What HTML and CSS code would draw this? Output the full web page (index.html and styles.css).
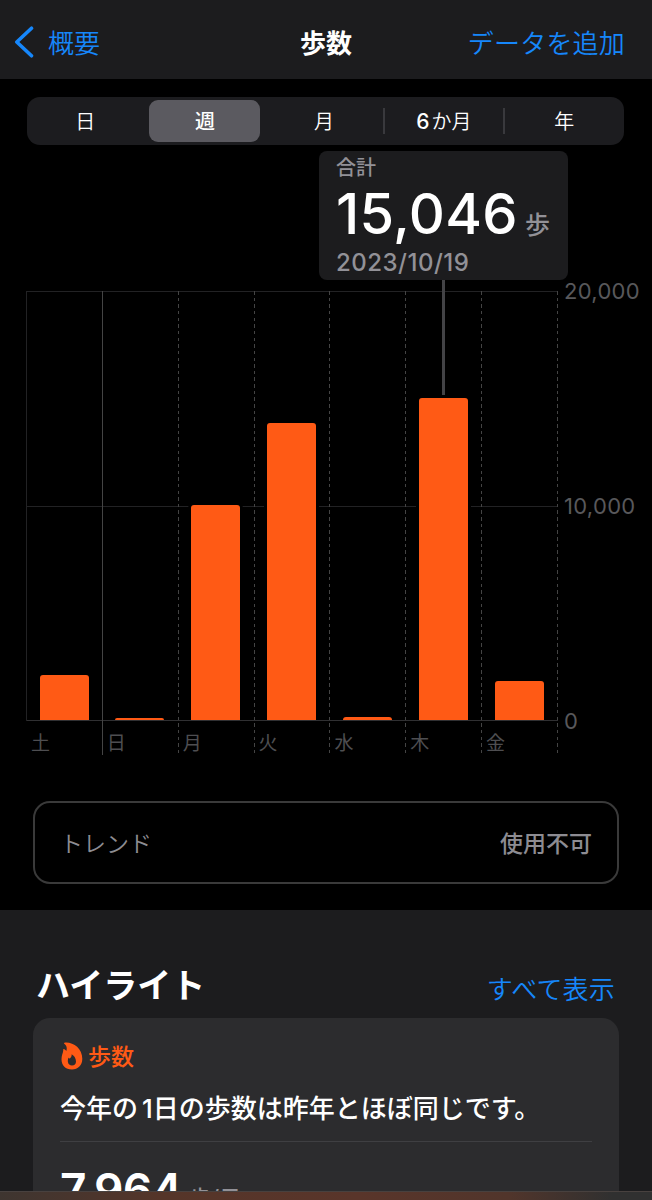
FILE: index.html
```html
<!DOCTYPE html>
<html lang="ja">
    <head>
        <meta charset="utf-8">
        <title>歩数</title>
        <link rel="stylesheet" href="styles.css">
    </head>
    <body>
        <header class="nav">
            <a class="back">
                <svg width="20" height="32" viewBox="0 0 20 32"><path d="M17.5 2.2 2.8 16l14.7 13.8" fill="none" stroke="#1687fb" stroke-width="3.6" stroke-linecap="round" stroke-linejoin="round"/></svg>
                <span>概要</span>
            </a>
            <h1>歩数</h1>
            <a class="add">データを追加</a>
        </header>

        <section class="chart">
            <div class="tabs">
                <div class="tab">日</div>
                <div class="tab selected"><span>週</span></div>
                <div class="tab">月</div>
                <div class="tab line"><b>6</b>か月</div>
                <div class="tab line">年</div>
            </div>

            <div class="tooltip">
                <div class="total">合計</div>
                <div class="value"><span class="number">15,046</span><span class="unit">歩</span></div>
                <div class="date">2023/10/19</div>
            </div>

            <div class="graph">
                <div class="plot">
                    <div class="day first"><div class="space"><div class="bar" style="height: 45px"></div></div><span>土</span></div>
                    <div class="day week"><div class="space"><div class="bar" style="height: 2px"></div></div><span>日</span></div>
                    <div class="day"><div class="space"><div class="bar" style="height: 215px"></div></div><span>月</span></div>
                    <div class="day"><div class="space"><div class="bar" style="height: 297px"></div></div><span>火</span></div>
                    <div class="day"><div class="space"><div class="bar" style="height: 3px"></div></div><span>水</span></div>
                    <div class="day"><div class="space"><div class="bar picked" style="height: 322px"></div></div><span>木</span></div>
                    <div class="day"><div class="space"><div class="bar" style="height: 39px"></div></div><span>金</span></div>
                    <div class="day last"></div>
                </div>
                <div class="scale">
                    <span>20,000</span>
                    <span>10,000</span>
                    <span>0</span>
                </div>
            </div>

            <div class="trend">
                <span>トレンド</span>
                <strong>使用不可</strong>
            </div>
        </section>

        <section class="highlights">
            <div class="heading">
                <h2>ハイライト</h2>
                <a>すべて表示</a>
            </div>
            <div class="card">
                <div class="category">
                    <svg width="22" height="28" viewBox="0 0 22 28"><path fill="#ff5a15" fill-rule="evenodd" d="M3.4.7C11.500-.4 21.300 6 21.300 16.800 21.300 23.500 17 27.500 10.900 27.500 4.600 27.500.500 23.300.500 17.200.500 13.600 1.900 11.300 2.200 8.700 2.300 7.800 2 7.200 2.700 7 3.500 6.900 4.600 8 5.300 9 6.400 6 5.400 3.300 3.300 1.800 2.800 1.400 2.800.8 3.400.7ZM10.600 12.200C11 14.500 9.500 15.500 8.700 16.700 8.300 16.300 7.900 15.700 7.500 15.800 6.900 17.100 6.700 18.300 6.900 19.700 7.200 22.200 8.800 23.500 11 23.500 13.400 23.500 15 21.900 15 19.500 15 16.100 13 13.400 10.600 12.200Z"/></svg>
                    <span>歩数</span>
                </div>
                <p class="summary">今年の<span>1</span>日の歩数は昨年とほぼ同じです。</p>
                <div class="average"><span class="number">7,964</span><span class="unit">歩/日</span></div>
            </div>
        </section>
        <div class="bottom"></div>
    </body>
</html>
```

FILE: styles.css
```css
* {
    box-sizing: border-box;
}
body {
    margin: 0;
    width: 652px;
    height: 1200px;
    overflow: hidden;
    display: flex;
    flex-direction: column;
    background: #000;
    color: #fff;
    font-family: Inter, "Noto Sans CJK JP", sans-serif;
}
h1, h2, p {
    margin: 0;
}
a {
    color: #1687fb;
    font-size: 26px;
    font-weight: 350;
}
.nav {
    height: 79px;
    flex: none;
    display: grid;
    grid-template-columns: 1fr auto 1fr;
    align-items: center;
    padding: 8px 27px 0 14px;
    background: #1c1c1e;
    line-height: 40px;
}
.nav h1 {
    font-size: 26px;
    font-weight: 700;
    margin-left: 13px;
}
.back {
    display: flex;
    align-items: center;
    gap: 14px;
}
.back svg {
    margin-top: -3px;
}
.add {
    text-align: right;
    letter-spacing: 0.2px;
}
.chart {
    position: relative;
    height: 831px;
    flex: none;
    padding-top: 18px;
}
.tabs {
    display: flex;
    width: 597px;
    height: 48px;
    margin-left: 27px;
    border-radius: 13px;
    background: #1c1c1f;
    font-size: 20px;
    line-height: 50px;
    text-align: center;
}
.tab {
    width: 119.4px;
    flex: none;
    position: relative;
    font-weight: 350;
}
.tab:first-child {
    padding-right: 3px;
}
.tab:nth-child(3) {
    padding-right: 3px;
}
.tab b {
    font-weight: 500;
    margin-right: 2px;
    margin-left: -2px;
    font-size: 21px;
}
.selected span {
    display: block;
    width: 111px;
    height: 42px;
    margin: 3px 0 0 3px;
    line-height: 44px;
    border-radius: 9px;
    background: #5b5a60;
    font-weight: 500;
}
.line::before {
    content: "";
    position: absolute;
    left: -2px;
    top: 11px;
    width: 2px;
    height: 26px;
    background: #39393d;
}
.tooltip {
    position: absolute;
    left: 319px;
    top: 72px;
    width: 249px;
    height: 129px;
    padding: 2px 17px;
    border-radius: 8px;
    background: #1c1c1e;
    color: #929197;
    font-weight: 500;
}
.total {
    font-size: 20px;
    line-height: 30px;
}
.value {
    display: flex;
    align-items: baseline;
    height: 64px;
    line-height: 62px;
}
.number {
    color: #fff;
    font-size: 56px;
    font-weight: 500;
    letter-spacing: 0.3px;
}
.unit {
    margin-left: 7px;
    font-size: 25px;
}
.date {
    font-size: 24px;
    line-height: 32px;
    letter-spacing: 0.5px;
}
.graph {
    display: flex;
    margin: 146px 0 0 26px;
}
.plot {
    display: flex;
    width: 532px;
    height: 464px;
    background:
        linear-gradient(#222224, #222224) 0 0 / 532px 1px no-repeat,
        linear-gradient(#222224, #222224) 0 215px / 532px 1px no-repeat,
        linear-gradient(#303032, #303032) 0 429px / 532px 1px no-repeat;
}
.day {
    width: 75.85px;
    flex: none;
    background: repeating-linear-gradient(#444 0 3.5px, transparent 3.5px 6.65px) 0 0 / 1px 100% no-repeat;
    color: #4e4e51;
    font-size: 19px;
}
.day span {
    display: block;
    margin-left: 5px;
    line-height: 47px;
}
.first {
    background: linear-gradient(#222224, #222224) 0 0 / 1px 430px no-repeat;
}
.week {
    background: linear-gradient(#444, #444) 0 0 / 1px 100% no-repeat;
}
.last {
    width: 1px;
}
.space {
    height: 429px;
    display: flex;
    align-items: flex-end;
    padding-left: 13.5px;
}
.bar {
    position: relative;
    width: 49px;
    border-radius: 3px 3px 0 0;
    background: #ff5a15;
    box-shadow: -3px 0 #000, 3px 0 #000;
}
.picked::before {
    content: "";
    position: absolute;
    left: 23px;
    bottom: calc(100% + 3px);
    width: 3px;
    height: 115px;
    background: #434346;
}
.scale {
    display: flex;
    flex-direction: column;
    justify-content: space-between;
    height: 460px;
    margin: -15px 0 0 6px;
    color: #58585b;
    font-size: 22px;
    line-height: 30px;
    letter-spacing: 0.3px;
}
.trend {
    display: flex;
    align-items: center;
    justify-content: space-between;
    width: 586px;
    height: 83px;
    margin: 46px 0 0 33px;
    padding: 0 25px 2px 25px;
    border: 2px solid #3a3a3a;
    border-radius: 17px;
    color: #8d8c92;
    font-size: 23px;
    font-weight: 350;
}
.trend strong {
    font-weight: 500;
}
.highlights {
    flex: 1;
    min-height: 0;
    overflow: hidden;
    background: #1c1c1e;
    padding: 50px 33px 0;
}
.heading {
    display: flex;
    align-items: center;
    justify-content: space-between;
    height: 58px;
    padding: 0 4px 0 3px;
}
.heading h2 {
    font-size: 34px;
    font-weight: 700;
    line-height: 50px;
    margin-top: -6px;
}
.heading a {
    margin-top: -4px;
    letter-spacing: 0.2px;
}
.card {
    height: 260px;
    padding: 20px 27px;
    border-radius: 17px;
    background: #2c2c2e;
}
.category {
    display: flex;
    align-items: center;
    gap: 5px;
    height: 35px;
    color: #ff5a15;
    font-size: 23px;
    font-weight: 500;
}
.category svg {
    margin-left: 1px;
}
.category span {
    margin-top: -1px;
}
.summary {
    height: 69px;
    padding-top: 16px;
    border-bottom: 1px solid #3f3f42;
    font-size: 26px;
    font-weight: 500;
    line-height: 40px;
    white-space: nowrap;
}
.summary span {
    margin-left: 4px;
}
.average {
    display: flex;
    align-items: flex-start;
    margin-top: 16px;
    line-height: 65px;
    color: #929197;
    font-weight: 500;
}
.average .number {
    font-size: 46px;
    font-weight: 600;
    letter-spacing: -0.5px;
}
.average .unit {
    font-size: 22px;
    line-height: 30px;
    margin-top: 25px;
}
.bottom {
    height: 9px;
    flex: none;
    border-top: 1px solid #48413f;
    background: linear-gradient(90deg, #3e3530, #553529 25%, #59352a 55%, #51352b 78%, #303030 94%);
}
```
